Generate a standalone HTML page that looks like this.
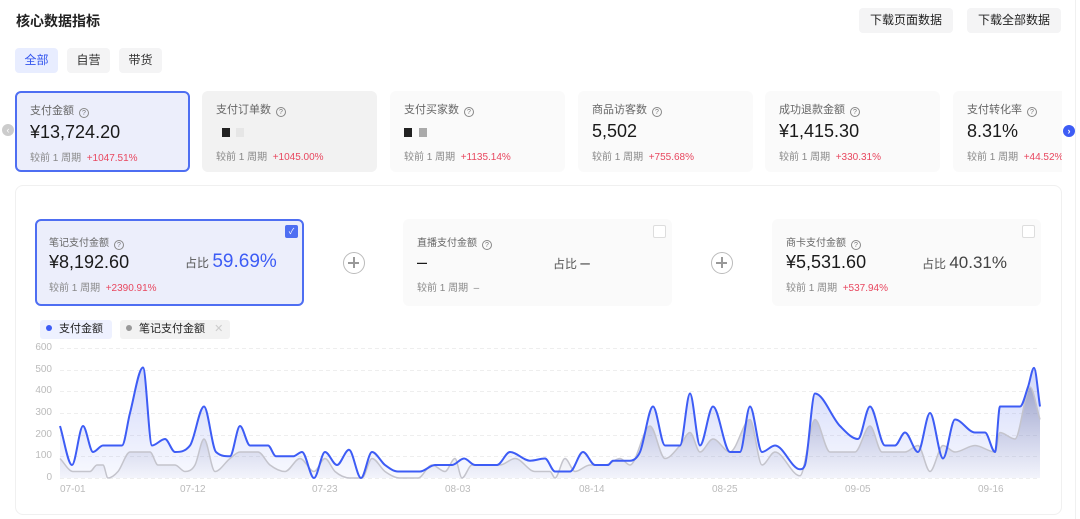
<!DOCTYPE html>
<html><head><meta charset="utf-8">
<style>
*{margin:0;padding:0;box-sizing:border-box}
body{width:1080px;height:519px;background:#fff;font-family:"Liberation Sans","Noto Sans CJK SC",sans-serif;color:#222;position:relative;overflow:hidden}
.a{position:absolute}
.btn{background:#f4f4f5;border-radius:4px;font-size:12px;color:#222;text-align:center;line-height:25px;height:25px;width:94px;top:8px}
.tab{top:48px;height:25px;width:43px;border-radius:4px;background:#f4f4f5;font-size:12px;text-align:center;line-height:25px;color:#333}
.card{top:91px;height:81px;width:175px;border-radius:6px;background:#fafafa;overflow:hidden}
.card .t{position:absolute;left:14px;top:10px;font-size:11px;color:#666}
.card .v{position:absolute;left:14px;top:30px;font-size:18px;font-weight:500;color:#1a1a1a}
.card .c{position:absolute;left:14px;top:57px;font-size:10px;color:#888;white-space:nowrap}
.r{color:#e8475f}
.q{display:inline-block;width:10px;height:10px;border:1px solid #888;border-radius:50%;font-size:7px;line-height:9px;text-align:center;margin-left:5px;vertical-align:-1px;color:#777}
.sc{top:219px;height:87px;width:269px;border-radius:6px;background:#fafafa}
.sc .t{position:absolute;left:14px;top:15px;font-size:10px;color:#666}
.sc .v{position:absolute;left:14px;top:33px;font-size:18px;font-weight:500;color:#1a1a1a}
.sc .c{position:absolute;left:14px;top:60px;font-size:10px;color:#888;white-space:nowrap}
.sc .p{position:absolute;left:150px;top:34px;font-size:12px;color:#555;white-space:nowrap}
.sc .p b{font-size:17px;font-weight:500;color:#444}
.chk{position:absolute;right:6px;top:6px;width:13px;height:13px;border:1px solid #ddd;border-radius:2px;background:#fff}
.plus{width:22px;height:22px;border:1.5px solid #bbb;border-radius:50%;top:252px}
.plus:before{content:"";position:absolute;left:4px;top:9px;width:11px;height:1.5px;background:#999}
.plus:after{content:"";position:absolute;left:9px;top:4px;width:1.5px;height:11px;background:#999}
.yl{font-size:10px;color:#bbb;width:20px;text-align:right;left:32px}
.xl{font-size:10px;color:#bbb;top:484px}
</style></head><body>
<div class="a" style="left:16px;top:11px;font-size:14px;font-weight:bold">核心数据指标</div>
<div class="a btn" style="left:859px">下载页面数据</div>
<div class="a btn" style="left:967px">下载全部数据</div>
<div class="a tab" style="left:15px;background:#e8edff;color:#3355ee">全部</div>
<div class="a tab" style="left:67px">自营</div>
<div class="a tab" style="left:119px">带货</div>

<div class="a" style="left:2px;top:124px;width:12px;height:12px;border-radius:50%;background:#ccc;color:#fff;font-size:9px;line-height:12px;text-align:center">‹</div>
<div class="a card" style="left:15px;background:#eceefb;border:2px solid #4e6ef2"><div class="t" style="left:13px;top:9px">支付金额<span class="q">?</span></div><div class="v" style="left:13px;top:29px">¥13,724.20</div><div class="c" style="left:13px;top:56px">较前 1 周期 &nbsp;<span class="r">+1047.51%</span></div></div>
<div class="a card" style="left:202px;background:#f2f2f2"><div class="t">支付订单数<span class="q">?</span></div><div class="v"><span style="display:inline-block;width:8px;height:9px;background:#222;margin-left:6px"></span><span style="display:inline-block;width:8px;height:9px;background:#e6e6e6;margin-left:6px"></span></div><div class="c">较前 1 周期 &nbsp;<span class="r">+1045.00%</span></div></div>
<div class="a card" style="left:390px"><div class="t">支付买家数<span class="q">?</span></div><div class="v"><span style="display:inline-block;width:8px;height:9px;background:#222"></span><span style="display:inline-block;width:8px;height:9px;background:#aaa;margin-left:7px"></span></div><div class="c">较前 1 周期 &nbsp;<span class="r">+1135.14%</span></div></div>
<div class="a card" style="left:578px"><div class="t">商品访客数<span class="q">?</span></div><div class="v">5,502</div><div class="c">较前 1 周期 &nbsp;<span class="r">+755.68%</span></div></div>
<div class="a card" style="left:765px"><div class="t">成功退款金额<span class="q">?</span></div><div class="v">¥1,415.30</div><div class="c">较前 1 周期 &nbsp;<span class="r">+330.31%</span></div></div>
<div class="a card" style="left:953px;width:109px;border-radius:6px 0 0 6px"><div class="t">支付转化率<span class="q">?</span></div><div class="v">8.31%</div><div class="c">较前 1 周期 &nbsp;<span class="r">+44.52%</span></div></div>
<div class="a" style="left:1063px;top:125px;width:12px;height:12px;border-radius:50%;background:#3d5cf5;color:#fff;font-size:9px;line-height:12px;text-align:center;font-weight:bold">›</div>
<div class="a" style="left:1075px;top:0;width:1px;height:519px;background:#f0f0f0"></div>

<div class="a" style="left:15px;top:185px;width:1047px;height:330px;border:1px solid #f0f0f0;border-radius:8px"></div>

<div class="a sc" style="left:35px;background:#eceefb;border:2px solid #4e6ef2"><div class="t" style="left:12px;top:13px">笔记支付金额<span class="q">?</span></div><div class="v" style="left:12px;top:31px">¥8,192.60</div><div class="p" style="left:148px;top:30px">占比 <b style="color:#3d5cf5;font-size:19px">59.69%</b></div><div class="c" style="left:12px;top:58px">较前 1 周期 &nbsp;<span class="r">+2390.91%</span></div><div class="chk" style="background:#4e6ef2;border-color:#4e6ef2;right:4px;top:4px;color:#fff;font-size:8px;line-height:11px;text-align:center">✓</div></div>
<div class="a plus" style="left:343px"></div>
<div class="a sc" style="left:403px"><div class="t">直播支付金额<span class="q">?</span></div><div class="v">–</div><div class="p">占比 <b>–</b></div><div class="c">较前 1 周期 &nbsp;–</div><div class="chk"></div></div>
<div class="a plus" style="left:711px"></div>
<div class="a sc" style="left:772px"><div class="t">商卡支付金额<span class="q">?</span></div><div class="v">¥5,531.60</div><div class="p">占比 <b>40.31%</b></div><div class="c">较前 1 周期 &nbsp;<span class="r">+537.94%</span></div><div class="chk"></div></div>

<div class="a" style="left:40px;top:320px;width:72px;height:19px;background:#eef1ff;border-radius:3px;font-size:11px;line-height:19px;padding-left:6px"><span style="display:inline-block;width:6px;height:6px;border-radius:50%;background:#3d5cf5;margin-right:7px;vertical-align:1px"></span>支付金额</div>
<div class="a" style="left:120px;top:320px;width:110px;height:19px;background:#f2f2f2;border-radius:3px;font-size:11px;line-height:19px;padding-left:6px"><span style="display:inline-block;width:6px;height:6px;border-radius:50%;background:#999;margin-right:7px;vertical-align:1px"></span>笔记支付金额 <span style="color:#ccc;margin-left:6px">✕</span></div>

<div class="a yl" style="top:342px">600</div>
<div class="a yl" style="top:364px">500</div>
<div class="a yl" style="top:385px">400</div>
<div class="a yl" style="top:407px">300</div>
<div class="a yl" style="top:429px">200</div>
<div class="a yl" style="top:450px">100</div>
<div class="a yl" style="top:472px">0</div>
<div class="a xl" style="left:60px">07-01</div>
<div class="a xl" style="left:180px">07-12</div>
<div class="a xl" style="left:312px">07-23</div>
<div class="a xl" style="left:445px">08-03</div>
<div class="a xl" style="left:579px">08-14</div>
<div class="a xl" style="left:712px">08-25</div>
<div class="a xl" style="left:845px">09-05</div>
<div class="a xl" style="left:978px">09-16</div>

<svg class="a" style="left:0;top:0" width="1080" height="519">
<defs>
<linearGradient id="gb" x1="0" y1="0" x2="0" y2="1"><stop offset="0" stop-color="#7d90f0" stop-opacity=".35"/><stop offset="1" stop-color="#7d90f0" stop-opacity=".05"/></linearGradient>
<linearGradient id="gg" x1="0" y1="0" x2="0" y2="1"><stop offset="0" stop-color="#6a6f9a" stop-opacity=".5"/><stop offset="1" stop-color="#8a90c0" stop-opacity=".05"/></linearGradient>
</defs>
<g stroke="#eee" stroke-dasharray="4 3" stroke-width="1">
<line x1="60" x2="1040" y1="348.5" y2="348.5"/><line x1="60" x2="1040" y1="370.5" y2="370.5"/><line x1="60" x2="1040" y1="391.5" y2="391.5"/><line x1="60" x2="1040" y1="413.5" y2="413.5"/><line x1="60" x2="1040" y1="435.5" y2="435.5"/><line x1="60" x2="1040" y1="456.5" y2="456.5"/><line x1="60" x2="1040" y1="478.5" y2="478.5"/>
</g>
<path id="ba" fill="url(#gb)"/><path id="ga" fill="url(#gg)"/>
<path id="gl" fill="none" stroke="#c4c4cc" stroke-width="1.5"/>
<path id="bl" fill="none" stroke="#3d5cf5" stroke-width="2"/>
</svg>
<script>
var B=[60,240,72,60,83,240,93,120,103,150,122,150,130,300,143,510,152,150,165,180,175,120,190,150,204,330,216,120,230,100,240,240,250,150,268,150,276,100,293,100,302,120,314,0,325,120,337,60,349,130,361,0,372,120,385,60,398,30,420,30,435,60,452,60,464,90,475,60,497,60,510,120,530,80,545,90,555,30,570,30,583,120,595,60,608,60,613,80,630,80,640,120,653,330,665,150,680,150,690,390,700,150,713,330,730,120,740,120,750,330,762,120,775,150,800,40,805,60,815,390,840,240,858,180,870,330,885,150,895,150,905,210,918,120,930,300,943,90,955,270,975,210,985,210,995,120,1000,330,1020,330,1028,420,1034,508,1040,330];
var G=[60,90,73,30,90,30,97,60,103,60,108,0,118,30,130,120,150,120,158,60,175,60,185,30,195,60,204,180,215,30,230,90,240,120,258,120,270,60,285,30,300,90,314,30,325,90,335,30,350,0,362,0,372,90,385,30,400,0,418,0,432,60,445,30,455,90,462,0,472,60,500,60,515,90,535,30,550,30,555,0,565,90,575,30,590,60,605,60,620,90,630,60,650,240,665,90,680,150,690,210,700,120,713,180,730,120,750,270,762,60,775,120,800,10,815,270,830,120,855,120,870,240,882,120,905,120,918,150,930,30,943,150,955,120,975,150,995,120,1000,210,1015,180,1030,420,1040,270];
function pts(a){var p=[];for(var i=0;i<a.length;i+=2)p.push([a[i],478-a[i+1]*0.2167]);return p}
function path(p){var n=p.length,d=[],m=[];for(var i=0;i<n-1;i++)d[i]=(p[i+1][1]-p[i][1])/(p[i+1][0]-p[i][0]);
m[0]=d[0];m[n-1]=d[n-2];for(i=1;i<n-1;i++){m[i]=(d[i-1]*d[i]<=0)?0:(d[i-1]+d[i])/2;}
for(i=0;i<n-1;i++){if(d[i]==0){m[i]=0;m[i+1]=0;continue}var a=m[i]/d[i],b=m[i+1]/d[i],s=a*a+b*b;if(s>9){var t=3/Math.sqrt(s);m[i]=t*a*d[i];m[i+1]=t*b*d[i];}}
var s="M"+p[0][0]+","+p[0][1].toFixed(1);for(i=0;i<n-1;i++){var h=(p[i+1][0]-p[i][0])/3;s+=" C"+(p[i][0]+h).toFixed(1)+","+(p[i][1]+m[i]*h).toFixed(1)+" "+(p[i+1][0]-h).toFixed(1)+","+(p[i+1][1]-m[i+1]*h).toFixed(1)+" "+p[i+1][0]+","+p[i+1][1].toFixed(1)}return s}
var bp=path(pts(B)),gp=path(pts(G));
document.getElementById('bl').setAttribute('d',bp);
document.getElementById('gl').setAttribute('d',gp);
document.getElementById('ba').setAttribute('d',bp+" L1040,478 L60,478 Z");
document.getElementById('ga').setAttribute('d',gp+" L1040,478 L60,478 Z");
</script>
</body></html>
